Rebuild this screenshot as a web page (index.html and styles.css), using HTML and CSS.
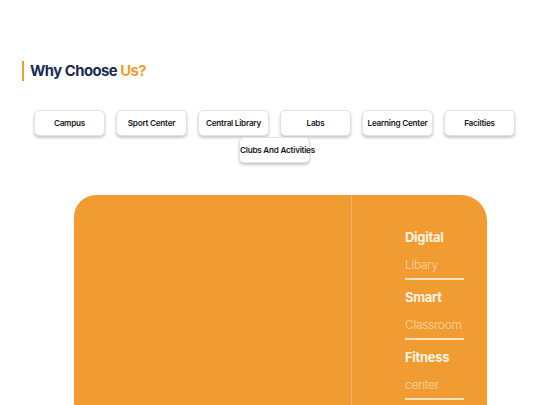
FILE: index.html
```
<!DOCTYPE html>
<html>
<head>
<meta charset="utf-8">
<link rel="stylesheet" href="styles.css">
</head>
<body>
<section class="why">
  <h2 class="title"><span class="navy">Why Choose</span> <span class="accent">Us?</span></h2>
  <div class="tabs">
    <button class="tab">Campus</button>
    <button class="tab">Sport Center</button>
    <button class="tab">Central Library</button>
    <button class="tab">Labs</button>
    <button class="tab">Learning Center</button>
    <button class="tab">Facilties</button>
    <button class="tab">Clubs And Activities</button>
  </div>
  <div class="card">
    <div class="media"></div>
    <div class="features">
      <div class="feature">
        <div class="f-title">Digital</div>
        <div class="f-sub">Libary</div>
      </div>
      <div class="feature">
        <div class="f-title">Smart</div>
        <div class="f-sub">Classroom</div>
      </div>
      <div class="feature">
        <div class="f-title">Fitness</div>
        <div class="f-sub">center</div>
      </div>
    </div>
  </div>
</section>
</body>
</html>
```
FILE: styles.css
```
html, body {
  margin: 0;
  padding: 0;
  background: #ffffff;
  overflow: hidden;
  height: 405px;
}
body {
  font-family: "Inter", "Open Sans", sans-serif;
}
.why {
  padding-top: 61px;
}
.title {
  margin: 0 0 0 22px;
  padding-left: 6px;
  border-left: 2px solid #f09c33;
  font-size: 14.8px;
  font-weight: 700;
  line-height: 20px;
  letter-spacing: -0.5px;
}
.navy { color: #1c2a52; }
.accent { color: #f09c33; }
.tabs {
  margin: 29px 0 0 34px;
  width: 481px;
  display: flex;
  flex-wrap: wrap;
  justify-content: center;
  column-gap: 11px;
  row-gap: 1px;
}
.tab {
  width: 71px;
  height: 26px;
  padding: 0;
  background: #ffffff;
  border: 1px solid #e2e2e2;
  border-radius: 5px;
  box-shadow: 0 2px 3px rgba(0,0,0,0.22);
  font-family: "Inter", "Open Sans", sans-serif;
  font-size: 8.2px;
  font-weight: 600;
  color: #1a1a1a;
  letter-spacing: -0.25px;
  white-space: nowrap;
}
.card {
  margin: 32px 0 0 74px;
  width: 413px;
  height: 260px;
  background: #f09c33;
  border-radius: 22px 26px 0 0;
  display: flex;
}
.media {
  width: 277px;
  border-right: 1px solid #f4b76a;
}
.features {
  padding: 32px 0 0 53px;
}
.feature {
  width: 59px;
  margin-bottom: 7px;
}
.f-title {
  font-size: 13px;
  font-weight: 700;
  line-height: 20px;
  color: #fff4e2;
  letter-spacing: -0.3px;
}
.f-sub {
  margin-top: 8px;
  padding-bottom: 3px;
  border-bottom: 2px solid #fde3bd;
  font-size: 12px;
  font-weight: 300;
  line-height: 20px;
  color: #fbd6a0;
  letter-spacing: -0.3px;
  white-space: nowrap;
}
```
